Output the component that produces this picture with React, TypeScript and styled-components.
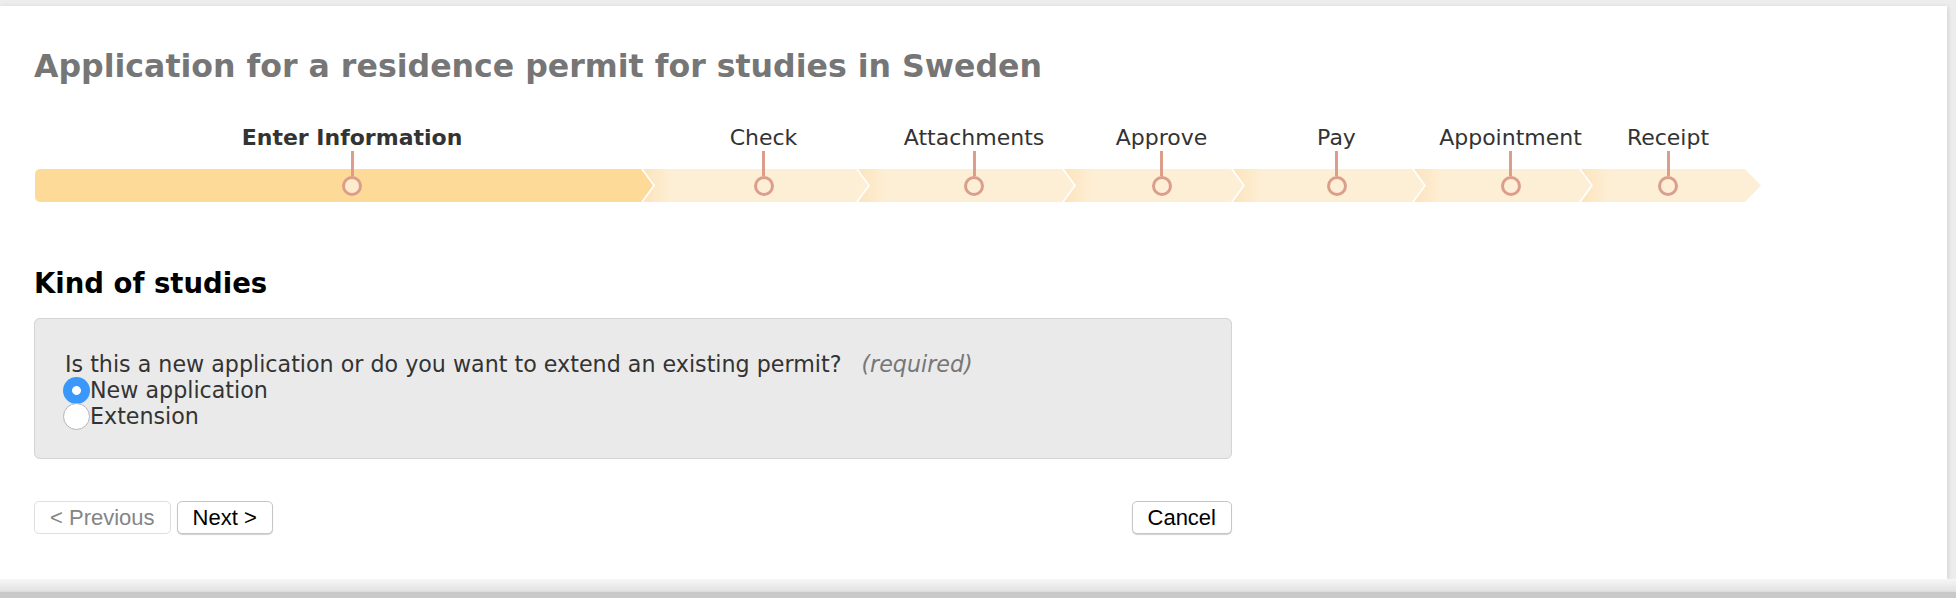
import React from "react";
import styled, { createGlobalStyle } from "styled-components";

const GlobalStyle = createGlobalStyle`
  html, body {
    margin: 0;
    padding: 0;
  }
  body {
    background: #ededed;
    font-family: "DejaVu Sans", Verdana, sans-serif;
    color: #333;
  }
`;

const Page = styled.div`
  width: 1956px;
  height: 598px;
  display: flex;
  flex-direction: column;
  overflow: hidden;
`;

const Window = styled.main`
  height: 573px;
  margin: 6px 9px 0 0;
  padding: 41px 34px 0;
  box-sizing: border-box;
  background: #fff;
  box-shadow: 1px 1px 5px rgba(0, 0, 0, 0.12);
`;

const BottomEdge = styled.div`
  flex: 1;
  background: linear-gradient(#f6f6f6, #e2e2e2 65%, #c9c9c9 70%, #c9c9c9);
`;

const Title = styled.h1`
  margin: 0;
  font-size: 31.6px;
  line-height: 38px;
  font-weight: bold;
  color: #767676;
`;

const Stepper = styled.ol`
  display: flex;
  list-style: none;
  margin: 40px 0 0 1px;
  padding: 0;
`;

const Step = styled.li<{ $width: number; $first: boolean }>`
  width: ${(p) => p.$width}px;
  margin-left: ${(p) => (p.$first ? 0 : -10)}px;
  display: flex;
  flex-direction: column;
  flex-shrink: 0;
`;

const StepHead = styled.div<{ $padEnd: number }>`
  display: flex;
  flex-direction: column;
  align-items: center;
  padding: 0 ${(p) => p.$padEnd}px 0 16px;
`;

const StepLabel = styled.span<{ $current: boolean }>`
  font-size: 22px;
  line-height: 26px;
  white-space: nowrap;
  font-weight: ${(p) => (p.$current ? "bold" : "normal")};
  color: #333;
`;

const Stem = styled.span`
  position: relative;
  z-index: 1;
  width: 3px;
  height: 25px;
  margin-bottom: -7px;
  background: #dc9e8b;
`;

const Segment = styled.div<{
  $current: boolean;
  $first: boolean;
  $tip: number;
  $padEnd: number;
}>`
  height: 33px;
  display: flex;
  align-items: center;
  justify-content: center;
  padding: 0 ${(p) => p.$padEnd}px 0 16px;
  border-radius: ${(p) => (p.$first ? "5px 0 0 5px" : "0")};
  background: ${(p) =>
    p.$current
      ? "#fdda98"
      : "linear-gradient(90deg, #fbe3bd 0, #fde9c9 14px, #fdefd6 30px)"};
  clip-path: ${(p) =>
    p.$first
      ? `polygon(0 0, calc(100% - ${p.$tip}px) 0, 100% 50%, calc(100% - ${p.$tip}px) 100%, 0 100%)`
      : `polygon(0 0, calc(100% - ${p.$tip}px) 0, 100% 50%, calc(100% - ${p.$tip}px) 100%, 0 100%, 12px 50%)`};
`;

const Dot = styled.span<{ $current: boolean }>`
  width: 20px;
  height: 20px;
  box-sizing: border-box;
  border-radius: 50%;
  border: 3px solid #dc9e8b;
  background: ${(p) => (p.$current ? "#fdeccb" : "#fdefd6")};
`;

const Form = styled.form`
  width: 1198px;
  margin-top: 65px;
`;

const Heading = styled.h2`
  margin: 0;
  font-size: 27.5px;
  line-height: 32px;
  font-weight: bold;
  color: #000;
`;

const Group = styled.fieldset`
  margin: 19px 0 0;
  padding: 32px 30px 29px;
  border: 1px solid #d4d4d4;
  border-radius: 6px;
  background: #eaeaea;
  font-size: 22.2px;
  line-height: 26px;
  color: #333;
`;

const Question = styled.p`
  margin: 0;
`;

const Required = styled.em`
  margin-left: 20px;
  color: #777;
`;

const Option = styled.label`
  display: flex;
  align-items: center;
  height: 26px;
`;

const Radio = styled.input`
  appearance: none;
  width: 27px;
  height: 27px;
  margin: 0 0 0 -2px;
  box-sizing: border-box;
  border-radius: 50%;
  border: 1px solid #b5b5b5;
  background: #fff;
  flex-shrink: 0;

  &:checked {
    border: none;
    background: radial-gradient(circle, #fff 0 4px, #3b98fb 4.8px);
  }
`;

const Actions = styled.div`
  display: flex;
  justify-content: space-between;
  margin-top: 42px;
`;

const Nav = styled.div`
  display: flex;
  gap: 6px;
`;

const Button = styled.button<{ $muted?: boolean }>`
  height: 33px;
  padding: 0 15px;
  border-radius: 5px;
  border: 1px solid ${(p) => (p.$muted ? "#dedede" : "#c6c6c6")};
  background: #fff;
  box-shadow: ${(p) => (p.$muted ? "none" : "0 1px 1px rgba(0, 0, 0, 0.18)")};
  font-family: "Liberation Sans", Arial, sans-serif;
  font-size: 22px;
  color: ${(p) => (p.$muted ? "#858585" : "#000")};
`;

const steps = [
  { label: "Enter Information", width: 618, current: true },
  { label: "Check", width: 225 },
  { label: "Attachments", width: 216 },
  { label: "Approve", width: 179 },
  { label: "Pay", width: 191 },
  { label: "Appointment", width: 177 },
  { label: "Receipt", width: 180, last: true },
];

const App: React.FC = () => {
  return (
    <Page>
      <GlobalStyle />
      <Window>
        <Title>Application for a residence permit for studies in Sweden</Title>
        <Stepper>
          {steps.map((s, i) => {
            const padEnd = s.last ? 22 : 0;
            const current = !!s.current;
            return (
              <Step key={s.label} $width={s.width} $first={i === 0}>
                <StepHead $padEnd={padEnd}>
                  <StepLabel $current={current}>{s.label}</StepLabel>
                  <Stem />
                </StepHead>
                <Segment
                  $current={current}
                  $first={i === 0}
                  $tip={s.last ? 16 : 12}
                  $padEnd={padEnd}
                >
                  <Dot $current={current} />
                </Segment>
              </Step>
            );
          })}
        </Stepper>
        <Form>
          <Heading>Kind of studies</Heading>
          <Group>
            <Question>
              Is this a new application or do you want to extend an existing
              permit?
              <Required>(required)</Required>
            </Question>
            <Option>
              <Radio type="radio" name="kind" defaultChecked />
              New application
            </Option>
            <Option>
              <Radio type="radio" name="kind" />
              Extension
            </Option>
          </Group>
          <Actions>
            <Nav>
              <Button type="button" $muted disabled>
                &lt; Previous
              </Button>
              <Button type="button">Next &gt;</Button>
            </Nav>
            <Button type="button">Cancel</Button>
          </Actions>
        </Form>
      </Window>
      <BottomEdge />
    </Page>
  );
};

export default App;
